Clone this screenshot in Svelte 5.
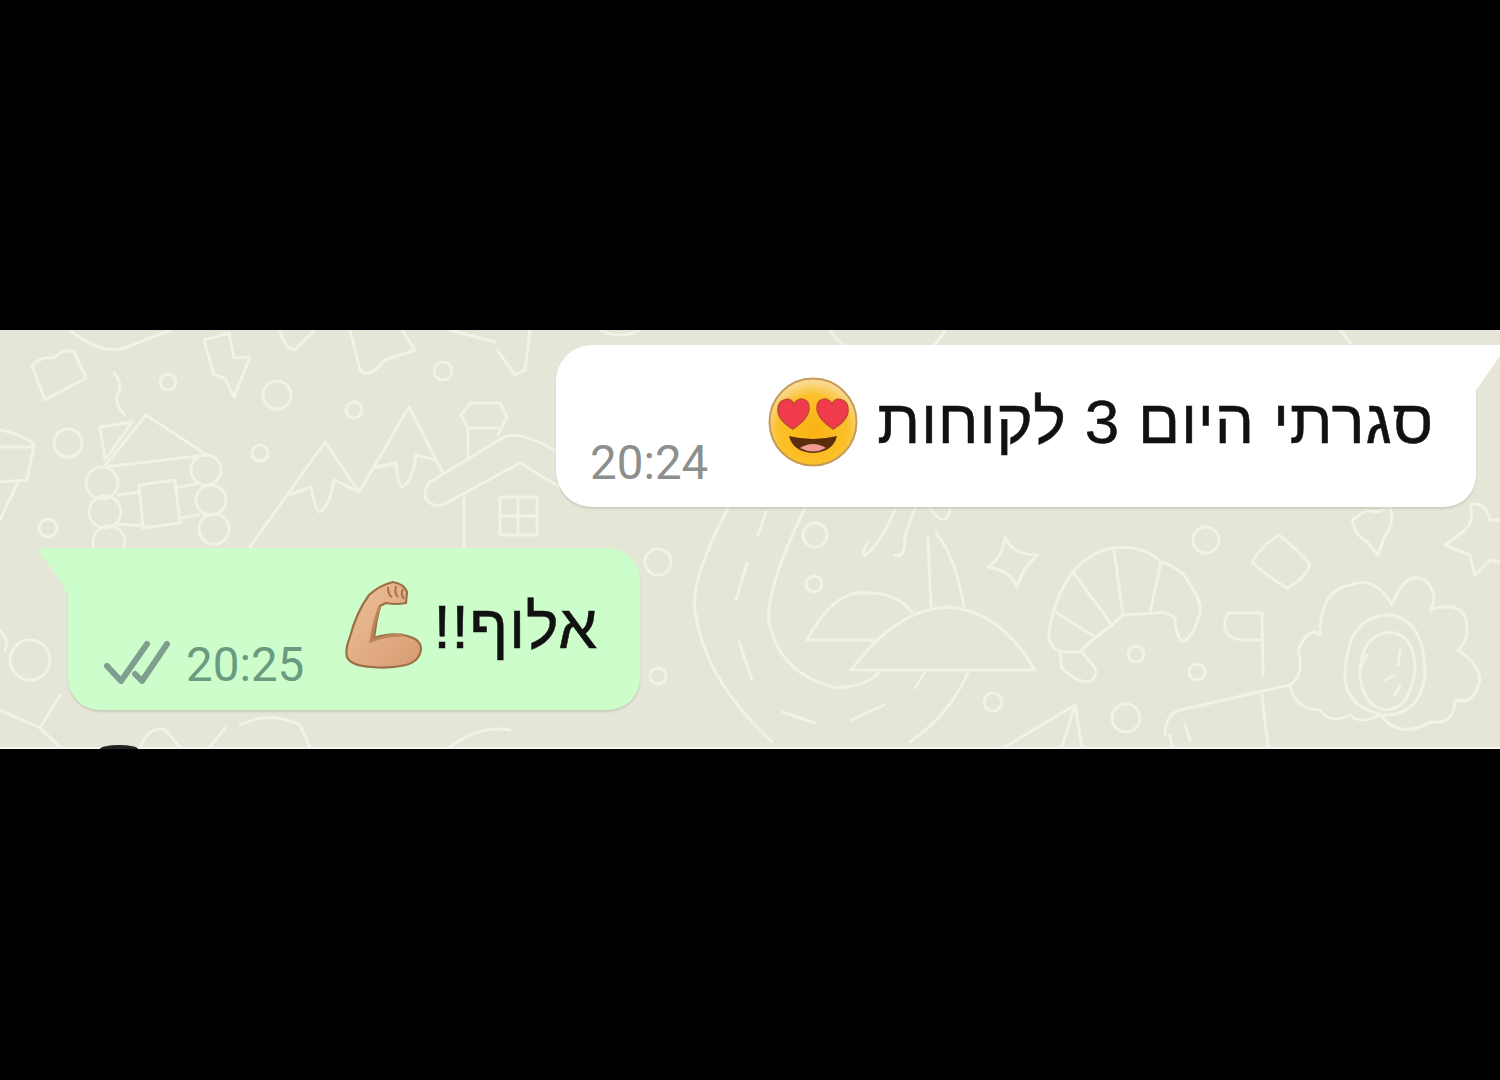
<script>
  const circles = [
    [168, 52, 8], [277, 65, 14], [354, 80, 8], [68, 113, 14], [260, 123, 8], [48, 198, 9], [443, 41, 9],
    [102, 153, 16], [105, 182, 16], [109, 212, 16], [206, 140, 15], [211, 170, 15], [214, 199, 15],
    [815, 205, 12], [814, 254, 8], [658, 346, 8], [993, 372, 9], [1126, 388, 14],
    [1206, 210, 13], [1136, 324, 8], [1197, 342, 8], [30, 330, 20], [658, 232, 13]
  ];
  const doodles = [
    'M32 36 Q40 26 54 28 Q64 18 74 22 L86 48 L45 70 Z',
    'M204 10 L229 3 L234 28 L250 27 L234 67 L225 48 L214 45 Z',
    'M114 43 Q124 55 117 65 Q115 75 125 85',
    'M146 85 L207 125 L104 137 Z M100 97 L132 92 L105 130 Z',
    'M139 155 L175 150 L180 193 L143 198 Z M118 165 L139 162 M118 194 L143 196 M175 158 L196 154 M180 188 L199 185',
    'M250 217 L325 112 L359 162 L409 77 L443 143',
    'M289 165 L311 157 Q316 182 320 182 Q330 175 334 150 L359 162 M377 137 L396 133 Q398 157 403 157 Q413 150 416 125 L436 130',
    'M468 130 L468 98 L461 85 L471 73 L500 73 L507 87 L498 105 M468 98 L498 98',
    'M504 107 Q520 100 560 123 M504 107 L430 152 Q420 165 430 173 Q438 178 446 173 L520 133 L560 157 M464 168 L464 217',
    'M500 167 H537 V205 H500 Z M518 167 V205 M500 186 H537',
    'M0 100 Q25 105 34 115 L27 150 L0 152 M0 117 L34 117 M18 152 L0 190',
    'M70 0 Q100 25 125 18 L170 0 M280 0 Q285 20 295 20 L315 0 M350 0 L360 40 Q368 50 385 30 L415 20 L402 0 M450 0 L495 12 M497 20 L515 45 L525 40 L530 0',
    'M728 178 Q690 250 695 282 Q705 350 772 412 M805 178 Q765 260 769 292 Q780 345 837 358 Q870 355 879 342',
    'M766 182 L758 205 M747 233 L736 270 M739 312 L752 350 M783 382 L815 393 M851 390 L884 375',
    'M851 340 H1035 Q1000 280 947 277 Q895 280 851 340 M807 310 H876 M807 310 Q835 258 868 263 Q895 262 912 282',
    'M931 277 L928 208 M964 277 Q955 225 936 203 M868 212 Q860 225 865 225 Q880 215 895 180 M895 225 Q905 230 905 205 L915 178 M930 178 Q945 200 950 180',
    'M969 340 Q950 385 910 412 M925 342 L915 358',
    'M1005 207 Q1012 225 1038 225 Q1022 238 1017 257 Q1010 240 988 237 Q1002 228 1005 207 Z',
    'M1049 302 Q1055 265 1073 242 Q1090 222 1112 218 Q1145 215 1161 232 Q1182 238 1188 252 Q1202 270 1200 282 Q1195 305 1183 312 Q1175 305 1175 288 Q1165 280 1156 283 L1123 285 L1112 295 L1095 308 L1079 322 L1062 322 Q1048 318 1049 302 Z',
    'M1073 242 L1112 295 M1114 220 L1123 285 M1161 232 L1150 282 M1057 283 L1095 307',
    'M1060 322 L1062 338 Q1075 352 1090 352 Q1098 345 1095 338 L1082 322',
    'M1279 205 Q1300 222 1309 233 Q1310 245 1287 258 Q1265 245 1252 232 Q1262 215 1279 205 Z',
    'M1367 180 Q1380 185 1390 175 Q1395 195 1385 205 L1378 225 L1365 210 Q1355 205 1352 190 Z',
    'M1465 200 Q1475 190 1470 175 Q1485 170 1490 190 L1500 190 M1465 200 L1445 215 L1470 225 L1475 245 L1490 230 L1500 232',
    'M1225 290 L1228 283 H1262 L1263 345 M1225 290 Q1222 310 1245 310 L1262 310',
    'M1290 355 Q1305 345 1298 320 Q1310 295 1320 305 Q1320 260 1350 255 Q1375 245 1392 275 Q1405 240 1425 250 Q1440 265 1430 280 Q1460 270 1466 290 Q1470 310 1458 320 Q1480 335 1480 350 Q1475 375 1455 370 Q1455 395 1430 392 Q1400 410 1380 385 Q1360 395 1350 385 Q1330 395 1320 380 Q1295 380 1290 355 Z',
    'M1345 350 Q1345 285 1390 285 Q1425 290 1425 345 Q1420 385 1385 385 Q1350 380 1345 350 Z M1360 345 Q1360 305 1390 302 Q1415 305 1415 340 Q1410 380 1385 380 Q1362 375 1360 345 Z',
    'M1367 325 L1362 335 M1400 320 L1398 335 M1385 350 L1395 345 M1400 355 L1395 365',
    'M1165 405 Q1165 385 1180 380 L1290 355 M1262 365 L1268 417 M1185 395 L1190 410 M1170 405 L1172 417',
    'M1005 417 L1075 375 L1062 417 M1075 375 L1082 417',
    'M60 365 L40 398 L60 417 M40 398 L0 380 M140 417 Q150 395 165 400 L180 417 M240 395 Q270 380 300 395 L310 417 M210 417 L225 398 M450 417 Q480 395 510 400',
    'M830 0 Q850 30 890 30 Q930 30 945 0 M1340 0 L1365 30 M0 300 Q10 310 5 320 M600 0 Q620 10 640 0'
  ];
</script>

<main class="chat">
  <svg class="doodles" viewBox="0 0 1500 417" aria-hidden="true">
    {#each circles as [cx, cy, r]}
      <circle {cx} {cy} {r} />
    {/each}
    {#each doodles as d}
      <path {d} />
    {/each}
  </svg>

  <div class="bubble incoming">
    <svg class="tail" viewBox="0 0 26 50" aria-hidden="true"><path d="M0 0 H24 Q26 2 24 11 L1 44 H0 Z" /></svg>
    <span class="time">20:24</span>
    <svg class="emoji face" viewBox="0 0 90 90" aria-label="smiling face with heart eyes">
      <defs>
        <radialGradient id="skin" cx="50%" cy="60%" r="56%">
          <stop offset="0" stop-color="#fbb212" />
          <stop offset=".72" stop-color="#fcc02a" />
          <stop offset="1" stop-color="#f8d98e" />
        </radialGradient>
      </defs>
      <circle cx="45" cy="45" r="43.5" fill="url(#skin)" stroke="#c69a58" stroke-width="2" />
      <g fill="#ef3b4c" stroke="#c2492f" stroke-width="1.5">
        <path d="M25 52 C15 46 9 39 10 31 C11 22 22 19 26 27 C30 19 42 21 41 32 C40 41 32 47 25 52 Z" />
        <path d="M65 52 C58 47 50 41 49 32 C48 21 60 19 64 27 C68 19 79 22 80 31 C81 39 75 46 65 52 Z" />
      </g>
      <path d="M21 59 Q45 65 69 59 Q65 75 45 76 Q25 75 21 59 Z" fill="#5a2d0c" />
      <path d="M32 71 Q45 63 58 71 Q45 78 32 71 Z" fill="#f09c92" />
    </svg>
    <span class="text" dir="rtl">סגרתי היום 3 לקוחות</span>
  </div>

  <div class="bubble outgoing">
    <svg class="tail" viewBox="0 0 30 50" aria-hidden="true"><path d="M30 0 H6 Q0 1 3 7 Q20 28 28 44 H30 Z" /></svg>
    <svg class="ticks" viewBox="0 0 66 46" aria-label="read">
      <path d="M3 28 L17 43 L43 6 M31 36 L38 43 L63 6" />
    </svg>
    <span class="time">20:25</span>
    <svg class="emoji arm" viewBox="8 9 80 90" aria-label="flexed biceps">
      <defs>
        <linearGradient id="flesh" x1="0" y1="0" x2="1" y2="1">
          <stop offset="0" stop-color="#edc29a" />
          <stop offset="1" stop-color="#d89a70" />
        </linearGradient>
      </defs>
      <path d="M57 11 Q68 13 71 21 L70 32 Q60 34 50 32 L44 35 Q40 50 38 67 Q52 62 67 64 Q85 67 85 78 Q84 90 70 94 Q52 98 36 96 Q15 95 11 86 Q9 78 14 66 Q20 42 33 24 Q44 14 57 11 Z" fill="url(#flesh)" stroke="#9c7047" stroke-width="2.2" />
      <path d="M52 16 Q52 24 56 26 M60 15 Q58 22 62 26 M67 18 Q64 23 68 28" fill="none" stroke="#a8714a" stroke-width="2" />
      <path d="M44 35 Q38 50 35 70 Q50 64 67 64" fill="none" stroke="#bd8459" stroke-width="3" />
    </svg>
    <span class="text" dir="rtl">אלוף!!</span>
  </div>

  <i class="bump"></i>
</main>

<style>
  :global(body) {
    background: #000;
    height: 1080px;
    overflow: hidden;
  }

  .chat {
    position: relative;
    display: flex;
    flex-direction: column;
    margin-top: 330px;
    height: 417px;
    box-sizing: content-box;
    background: #e5e6d8;
    border-bottom: 2px solid #f4f5ee;
    font-family: "Liberation Sans", Arial, sans-serif;
  }

  .doodles {
    position: absolute;
    inset: 0;
    width: 1500px;
    height: 417px;
    fill: none;
    stroke: #f1f2e8;
    stroke-width: 3;
    stroke-linejoin: round;
    stroke-linecap: round;
    filter: blur(0.5px);
  }

  .bubble {
    position: relative;
    display: flex;
    height: 162px;
    box-sizing: border-box;
    box-shadow: 0 2px 2px rgba(90, 95, 70, 0.18);
  }

  .incoming {
    align-self: flex-end;
    margin: 15px 24px 0 0;
    width: 920px;
    padding: 0 42px 0 34px;
    background: #fff;
    border-radius: 36px 0 32px 36px;
  }

  .outgoing {
    align-self: flex-start;
    margin: 41px 0 0 68px;
    width: 572px;
    padding: 0 42px 0 36px;
    background: #ccfdcb;
    border-radius: 0 32px 32px 32px;
  }

  .tail {
    position: absolute;
    top: 0;
  }

  .incoming .tail {
    left: 100%;
    width: 26px;
    height: 50px;
    fill: #fff;
  }

  .outgoing .tail {
    right: 100%;
    width: 30px;
    height: 50px;
    fill: #ccfdcb;
  }

  .time {
    align-self: flex-end;
    margin-bottom: 20px;
    font: 47.5px/1 Roboto, sans-serif;
    color: #8c8f8c;
  }

  .outgoing .time {
    margin-bottom: 21px;
    color: #6a9a80;
  }

  .text {
    margin-left: auto;
    align-self: flex-start;
    margin-top: 42px;
    font-size: 62px;
    line-height: 70px;
    letter-spacing: 0.8px;
    -webkit-text-stroke: 0.5px #111;
    color: #111;
    white-space: nowrap;
  }

  .outgoing .text {
    margin-top: 44px;
  }

  .emoji {
    flex: none;
  }

  .face {
    width: 90px;
    height: 90px;
    margin: 32px 0 0 60px;
  }

  .arm {
    width: 80px;
    height: 90px;
    margin: 32px 0 0 40px;
  }

  .ticks {
    flex: none;
    align-self: flex-end;
    width: 66px;
    height: 46px;
    margin: 0 16px 26px 0;
    fill: none;
    stroke: #7f9e90;
    stroke-width: 6;
    stroke-linecap: round;
    stroke-linejoin: round;
  }

  .bump {
    position: absolute;
    left: 100px;
    bottom: -2px;
    width: 38px;
    height: 4px;
    background: #222;
    border-radius: 50% 50% 0 0 / 100% 100% 0 0;
  }
</style>
